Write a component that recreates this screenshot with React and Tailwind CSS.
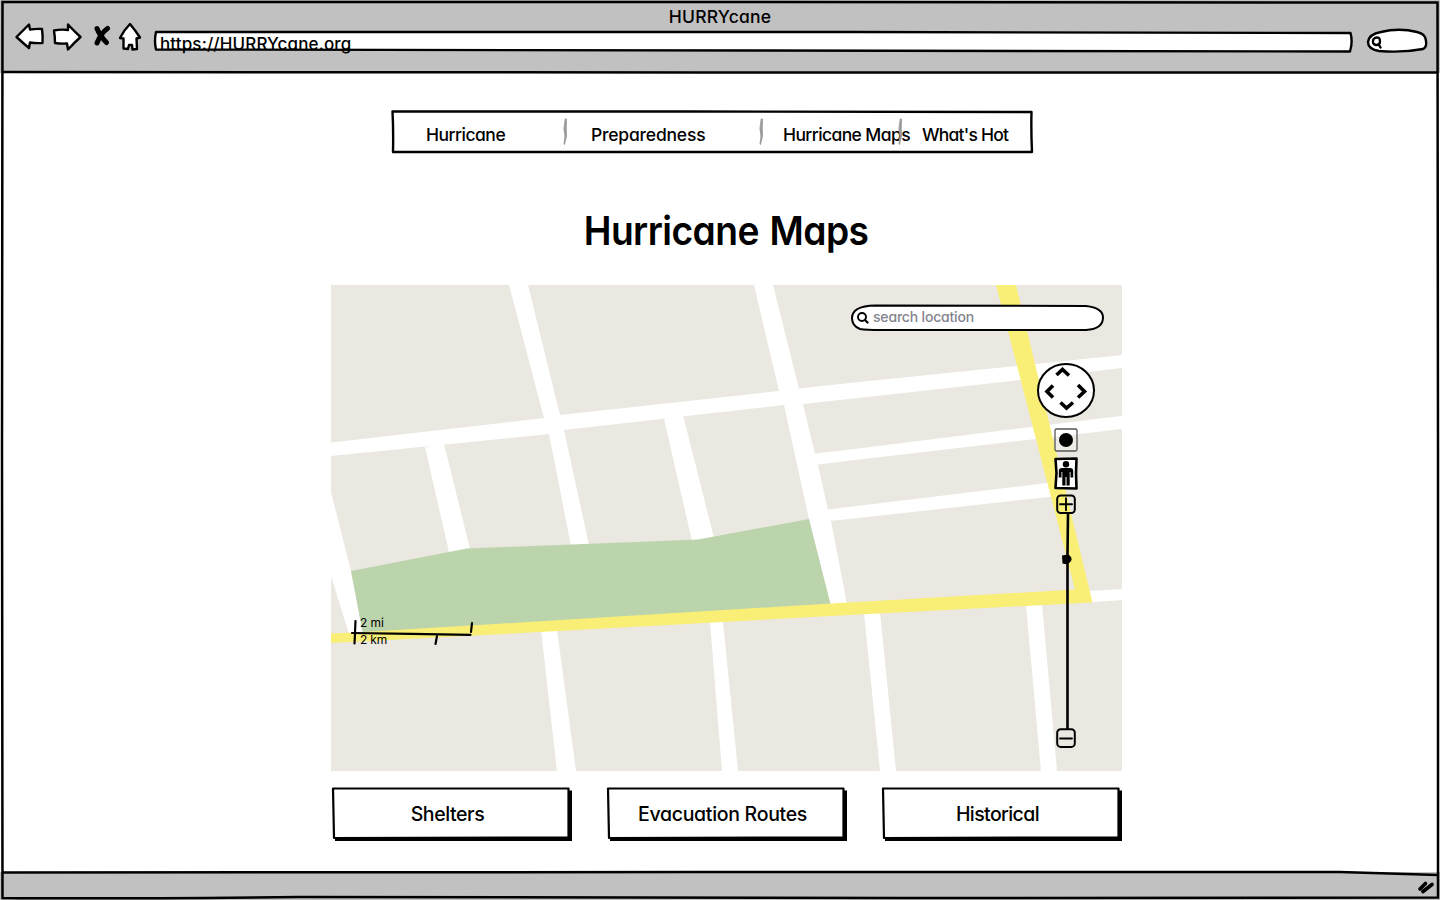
const roads = [
  "509,285 528,285 560,415 564,430 589,545 571,546 549,434 544,418",
  "754,285 773,285 799,389 803,404 815,454 818,465 828,510 831,521 847,604 830,605 809,519 784,405 779,391",
  "331,442.5 544,418 560,415 779,391 799,388.5 840,384 1016,366 1122,355 1122,368 1020,380 840,400 803,404 784,405 564,430 549,434 331,456",
  "812,454 840,450.7 1033,426.7 1122,415.7 1122,429 1036,439 840,461.7 815,465",
  "825,510 840,508 1048,483 1056,496 1051,496.7 840,520 828,521",
  "331,492 351,571 363,634 349,634 331,576",
  "425,447 444,444 470,549 449,552",
  "664,419 683,415 714,538 692,541",
  "541,630 557,630 576,771 557,771",
  "710,622 723,622 738,771 722,771",
  "864,613 880,612 896,771 880,771",
  "1026,605 1042,604 1057,771 1041,771",
  "1088,591 1122,589 1122,600 1090,602.5",
];

const font = "font-['Inter',sans-serif] [font-feature-settings:'cv11']";

function Glyph({ w, h, className, children }) {
  return (
    <svg width={w} height={h} viewBox={`0 0 ${w} ${h}`} className={`block shrink-0 overflow-visible ${className || ""}`} fill="none" stroke="#000" strokeLinecap="round" strokeLinejoin="round">
      {children}
    </svg>
  );
}

function Header() {
  return (
    <header className="flex h-[73px] shrink-0 flex-col bg-[#c1c1c1]">
      <div className="flex h-[23px] justify-center pt-[5px] text-[17.5px] leading-[24px] font-medium tracking-[0.2px]">
        <span>HURRYcane</span>
      </div>
      <div className="flex h-[31px] items-start pl-4">
        <Glyph w={28} h={27}>
          <path d="M0.500 14 L13 1.500 L14 6.5 Q20 5.500 26 6 Q27 13 26.500 20 Q20 20.500 14 19.500 L13 25 Q7 20 0.500 14Z" fill="#fff" strokeWidth="2.4" />
        </Glyph>
        <Glyph w={28} h={27} className="ml-[9px]">
          <path d="M1 7.500 Q8 6 15 7 L15 1.500 Q21 8 27.500 14 Q21 20 15 26.500 L14 20.500 Q8 21 2 20 Q2 14 1 7.500Z" fill="#fff" strokeWidth="2.4" />
        </Glyph>
        <Glyph w={16} h={24} className="ml-[13px]">
          <path d="M3 5.500 Q6 13 12.500 19.500 M13.500 5.500 Q7 10 3 20" strokeWidth="5" />
        </Glyph>
        <Glyph w={22} h={28} className="ml-[9px]">
          <path d="M11 1 Q16 7 21 14.500 L17.500 15.500 L18 26 L13.500 26.500 L13 22 L10 22 L9 26 L4.500 25.500 L4.500 15.500 L1 15 Q5 7 11 1Z" fill="#fff" strokeWidth="2.4" />
        </Glyph>
        <div className="relative ml-[13px] mt-2 h-[21px] w-[1198px]">
          <Glyph w={1198} h={21} className="absolute inset-0">
            <path d="M2 1 L700 1 L1196.500 2 Q1199 11 1196 20.500 L600 19.500 L2 18.500 Q0 10 2 1Z" fill="#fff" strokeWidth="2.4" />
          </Glyph>
          <div className="relative pl-[6px] pt-[1px] text-[17px] leading-[24px] font-medium tracking-[0.13px] whitespace-nowrap">
            https://HURRYcane.org
          </div>
        </div>
        <Glyph w={60} h={24} className="ml-[15px] mt-[6px]">
          <path d="M14 3 Q32 -1.500 50 3 Q59 5 59 12 Q60 18 56 20 Q35 24 12 22 Q1 20 1 13 Q2 5 14 3Z" fill="#fff" strokeWidth="2.400" />
          <path d="M12 9 Q9 7.500 6.500 10 Q4.500 15 9 16 Q13 16 13 12.500 Q13 10 12 9 M11.500 15 L13.500 18.500" strokeWidth="2.400" />
        </Glyph>
      </div>
    </header>
  );
}

function Separator() {
  return (
    <Glyph w={6} h={28} className="absolute -right-[3px] top-[8px]">
      <path d="M3.500 1 L4.500 1 L4.200 10 L4.500 18 L2.500 26.500 L2 26 L3 18 L2 11Z" fill="#999" stroke="#999" strokeWidth="0.900" />
    </Glyph>
  );
}

function Nav() {
  return (
    <nav className="relative ml-[391px] mt-[37px] h-[43px] w-[642px] shrink-0">
      <Glyph w={642} h={43} className="absolute inset-0">
        <path d="M1.500 1.500 L300 1.500 L640.500 2 Q640 20 641 42 L300 42 L2 42 Q2.500 20 1.500 1.500Z" strokeWidth="2.400" />
      </Glyph>
      <div className="relative grid h-full grid-cols-[174px_196px_139px_133px] pt-[13px] text-[17.5px] leading-[24px] font-medium whitespace-nowrap">
        <a className="pl-[35px] tracking-[-0.5px]">Hurricane</a>
        <a className="pl-[26px] tracking-[-0.2px]">Preparedness</a>
        <a className="pl-[22px] tracking-[-0.6px]">Hurricane Maps</a>
        <a className="pl-[22px] tracking-[-0.77px]">What's Hot</a>
      </div>
      <div className="pointer-events-none absolute inset-0 grid grid-cols-[174px_196px_139px_133px]">
        <div className="relative"><Separator /></div>
        <div className="relative"><Separator /></div>
        <div className="relative"><Separator /></div>
      </div>
    </nav>
  );
}

function MapCanvas() {
  return (
    <svg width="791" height="486" viewBox="331 285 791 486" className="absolute inset-0 block">
      <rect x="331" y="285" width="791" height="486" fill="#ebe8e1" />
      {roads.map((p) => <polygon key={p} points={p} fill="#fff" />)}
      <polygon points="351,571 467,548.500 698,539.5 809,519 831,606 363,634" fill="#bcd4ac" />
      <polygon points="996,285 1016,285 1092.500,602.500 831,616 495,634.500 331,643 331,633.500 363,632 495,624 831,603.500 1075,589.500" fill="#f9ef76" />
    </svg>
  );
}

function MapPanel() {
  return (
    <section className="relative h-[486px] w-[791px]">
      <MapCanvas />
      <div className="absolute left-[520px] top-[19px] flex h-[27px] w-[253px] items-center">
        <Glyph w={253} h={27} className="absolute inset-0">
          <path d="M24 1.500 L235 2 Q252 4 252 13.500 Q252 25 235 26 L30 26 Q15 26 9 25 Q1 22 1 14 Q1 2 24 1.500Z" fill="#fff" strokeWidth="2" />
          <circle cx="11" cy="13" r="4" strokeWidth="1.900" />
          <path d="M14 16 L16.500 18.500" strokeWidth="2.300" />
        </Glyph>
        <span className="relative pl-[22px] pb-[2px] text-[14px] leading-[20px] font-medium tracking-[-0.18px] text-[#83838d]">search location</span>
      </div>
      <div className="absolute left-[706px] top-[78px] flex w-[58px] flex-col items-center">
        <Glyph w={58} h={55}>
          <ellipse cx="29" cy="27.500" rx="28" ry="26.500" fill="#fff" strokeWidth="2" />
          <path d="M19.500 12 L25.500 6.500 L32 12.500 M16 22.500 L10 28.500 L16 34.500 M41 22 L47.500 28.500 L41 34.500 M23.500 39.500 L29.500 45 L36 39.500" strokeWidth="3.600" strokeLinecap="butt" strokeLinejoin="miter" />
        </Glyph>
        <Glyph w={24} h={24} className="mt-[10px]">
          <rect x="1" y="1" width="22" height="22" rx="1.500" fill="#fff" fillOpacity="0.2" stroke="#555" strokeWidth="1.300" />
          <circle cx="12" cy="12" r="7" fill="#000" stroke="none" />
        </Glyph>
        <Glyph w={24} h={33} className="mt-[5px]">
          <path d="M1.500 2 L22.500 1.500 L22 16 L22.500 31.500 L1.500 31 L2.500 16Z" fill="#fff" strokeWidth="2.600" />
          <circle cx="12" cy="7.300" r="3.200" fill="#000" stroke="none" />
          <path d="M8 11 H16 Q19.200 11 19.200 14 V20.500 H16.500 V15 H15.700 V28.500 H12.500 V20 H11.500 V28.500 H8.300 V15 H7.500 V20.500 H4.800 V14 Q4.800 11 8 11Z" fill="#000" stroke="none" />
        </Glyph>
        <div className="mt-[4px] h-[254px] w-[20px]">
          <Glyph w={20} h={254}>
            <path d="M12 20 L11.500 60 L11.500 235" strokeWidth="2.600" />
            <path d="M6 61.500 L12 60.500 Q16 62.500 15.500 66 Q13 71 9 70 L6.500 69.500Z" fill="#000" stroke="none" />
            <rect x="1.200" y="1.500" width="17.600" height="17.600" rx="3.500" strokeWidth="2" />
            <path d="M4 10.300 H16 M10 4.300 V16.300" strokeWidth="1.900" />
            <rect x="1.200" y="235.300" width="17.600" height="17.600" rx="3.500" fill="#ebe8e1" strokeWidth="2" />
            <path d="M4 244.500 H16" strokeWidth="1.800" />
          </Glyph>
        </div>
      </div>
      <div className="absolute left-[20px] top-[329px] h-[32px] w-[122px] pl-[9px] text-[12px] leading-[17px] whitespace-nowrap">
        <Glyph w={122} h={32} className="absolute inset-0">
          <path d="M4.500 7 L4 18 M4 20 L3.500 29.500 M121 9 L120 18 M86 22 L84.500 30" strokeWidth="2.200" />
          <path d="M1 19 L60 19.800 L119.500 20.800" strokeWidth="2.200" />
        </Glyph>
        <div className="relative tracking-[-0.1px]">2 mi</div>
        <div className="relative tracking-[-0.2px]">2 km</div>
      </div>
    </section>
  );
}

function SketchButton({ children }) {
  return (
    <button className="relative flex h-[54px] w-[240px] justify-center pt-[14px] pr-[9px] text-[19.500px] leading-[26px] font-medium whitespace-nowrap">
      <Glyph w={240} h={54} className="absolute inset-0">
        <path d="M238 3.500 V52 H3" strokeWidth="4" strokeLinecap="butt" strokeLinejoin="miter" />
        <path d="M1 1.500 L236.500 1.500 L236.500 50.500 L2 51 Q1.500 26 1 1.500Z" fill="#fff" strokeWidth="2.200" />
      </Glyph>
      <span className="relative">{children}</span>
    </button>
  );
}

function Footer() {
  return (
    <footer className="flex h-[28px] shrink-0 items-start justify-end bg-[#c1c1c1] pr-[5px] pt-[8px]">
      <Glyph w={18} h={14}>
        <path d="M3 9 L8.500 3.500 M6 11.500 L15 4.500" strokeWidth="3.700" />
      </Glyph>
    </footer>
  );
}

export default function App() {
  return (
    <div className={`relative flex h-[900px] w-[1440px] flex-col overflow-hidden bg-white text-black ${font}`}>
      <Header />
      <main className="flex grow flex-col">
        <Nav />
        <div className="ml-[331px] flex w-[791px] flex-col items-center">
          <h1 className="mt-[53px] mb-[29px] scale-x-[0.93] text-[40px] leading-[50px] font-semibold tracking-[-0.6px] [word-spacing:2px]">Hurricane Maps</h1>
          <MapPanel />
          <div className="mt-[16px] flex w-full gap-[35px] pl-[1px]">
            <SketchButton><span className="tracking-[-0.4px]">Shelters</span></SketchButton>
            <SketchButton><span className="tracking-[-0.3px]">Evacuation Routes</span></SketchButton>
            <SketchButton><span className="tracking-[-0.6px]">Historical</span></SketchButton>
          </div>
        </div>
      </main>
      <Footer />
      <svg width="1440" height="900" viewBox="0 0 1440 900" fill="none" stroke="#000" strokeWidth="2.500" className="pointer-events-none absolute inset-0">
        <path d="M2.500 2 L700 2 L1437.500 2.500 L1438 450 L1438 897.500 L900 898 L300 897 Q100 899 2.500 898 L2 450Z" />
        <path d="M3 72 L700 72.500 L1438 72.500 M3 872.500 L700 872 L1340 872 L1438 875" />
      </svg>
    </div>
  );
}
